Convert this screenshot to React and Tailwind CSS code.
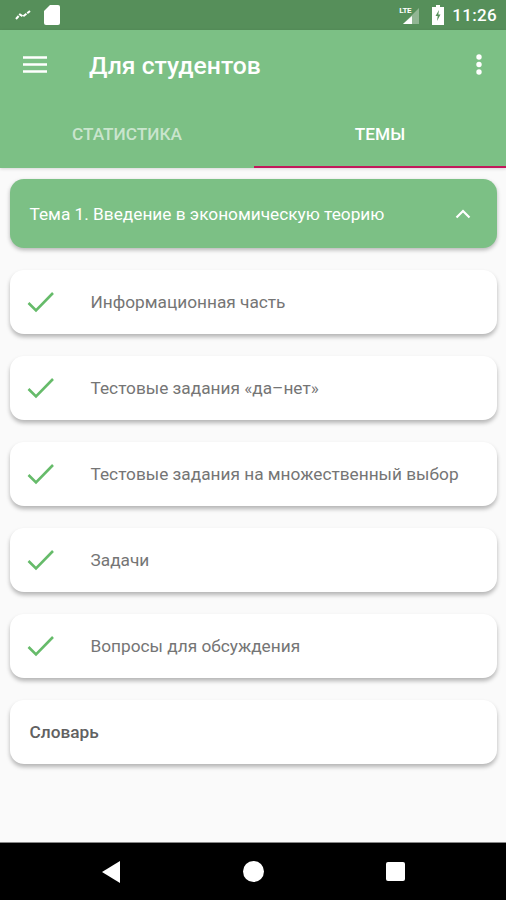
const items = [
  "Информационная часть",
  "Тестовые задания «да–нет»",
  "Тестовые задания на множественный выбор",
  "Задачи",
  "Вопросы для обсуждения",
];

const cardClass =
  "mx-[9.5px] h-[64px] flex items-center rounded-[14px] bg-white shadow-[0_3px_4px_rgba(0,0,0,0.28)]";

function Check() {
  return (
    <svg width="30" height="24" viewBox="0 0 30 24" fill="none" className="ml-[16px] mr-[35px] shrink-0">
      <path d="M2.5 13 L10 20.5 L27 3" stroke="#66bb6a" strokeWidth="2.6" />
    </svg>
  );
}

export default function App() {
  return (
    <div className="w-[506px] h-[900px] flex flex-col bg-[#fafafa] overflow-hidden font-['Roboto',sans-serif]">
      <div className="h-[30px] shrink-0 bg-[#568f5a] flex items-center pl-[15px] pr-[9px] text-white">
        <svg width="16" height="10" viewBox="0 0 16 10" fill="none">
          <path d="M1 9 L5 4.5 L8 6.5 L15 1" stroke="#fff" strokeWidth="2" strokeDasharray="4 1" />
        </svg>
        <svg width="16" height="20" viewBox="0 0 16 20" className="ml-[13px]">
          <path d="M6 0 H14 a2 2 0 0 1 2 2 V18 a2 2 0 0 1 -2 2 H2 a2 2 0 0 1 -2 -2 V6 Z" fill="#fff" />
        </svg>
        <div className="ml-auto flex items-center">
          <div className="relative w-[22px] h-[20px]">
            <svg width="22" height="18" viewBox="0 0 22 18" className="absolute left-0 top-[2px]">
              <path d="M21 1 V17 H5 Z" fill="#fff" fillOpacity="0.35" />
              <path d="M14 9 V17 H5 Z" fill="#fff" />
            </svg>
            <span className="absolute left-[1px] top-[1px] text-[8px] leading-[10px] font-bold tracking-[-0.4px]">LTE</span>
          </div>
          <svg width="12" height="20" viewBox="0 0 12 20" className="ml-[12px]">
            <path d="M4 0 H8 V2 H12 V20 H0 V2 H4 Z" fill="#fff" />
            <path d="M7 5 L3.5 11 H5.7 L5 16 L8.5 9.5 H6.3 Z" fill="#568f5a" />
          </svg>
          <span className="ml-[8px] text-[17px] leading-[20px] font-medium tracking-[0.3px]">11:26</span>
        </div>
      </div>

      <div className="h-[138px] shrink-0 bg-[#7cc085] flex flex-col shadow-[0_1px_3px_rgba(0,0,0,0.15)]">
        <div className="h-[71px] shrink-0 flex items-center pl-[23px] pr-[24px]">
          <svg width="24" height="17" viewBox="0 0 24 17" className="shrink-0 -translate-y-[1px]">
            <path d="M0 1.5 H24 M0 8.5 H24 M0 15.5 H24" stroke="#fff" strokeWidth="2.4" />
          </svg>
          <span className="ml-[42px] text-[24.7px] leading-[32px] font-medium text-white">Для студентов</span>
          <svg width="6" height="21" viewBox="0 0 6 21" className="ml-auto -translate-y-[1px]">
            <circle cx="3" cy="3" r="2.7" fill="#fff" />
            <circle cx="3" cy="10.5" r="2.7" fill="#fff" />
            <circle cx="3" cy="18" r="2.7" fill="#fff" />
          </svg>
        </div>
        <div className="flex-1 flex">
          <div className="w-[254px] flex items-start justify-center pt-[22px] text-[17.25px] leading-[22px] font-medium text-white/60">
            СТАТИСТИКА
          </div>
          <div className="w-[252px] flex items-start justify-center pt-[22px] text-[17.25px] leading-[22px] font-medium text-white border-b-[2px] border-[#c2185b]">
            ТЕМЫ
          </div>
        </div>
      </div>

      <div className="flex-1 flex flex-col pt-[11px] gap-[22px]">
        <div className="mx-[9.5px] h-[69px] flex items-center justify-between rounded-[14px] bg-[#7cc085] pl-[20px] pr-[26px] shadow-[0_2px_4px_rgba(0,0,0,0.28)]">
          <span className="text-[17.25px] leading-[22px] text-white">Тема 1. Введение в экономическую теорию</span>
          <svg width="16" height="10" viewBox="0 0 16 10" fill="none">
            <path d="M1.5 8.5 L8 2 L14.5 8.5" stroke="#fff" strokeWidth="2.2" />
          </svg>
        </div>
        {items.map((t) => (
          <div key={t} className={cardClass}>
            <Check />
            <span className="text-[17.25px] leading-[22px] text-[#757575]">{t}</span>
          </div>
        ))}
        <div className={cardClass + " pl-[20px]"}>
          <span className="text-[17.25px] leading-[22px] font-medium text-[#616161]">Словарь</span>
        </div>
      </div>

      <div className="h-[58px] shrink-0 bg-black flex items-center relative border-t border-[#888]">
        <svg width="18" height="22" viewBox="0 0 18 22" className="ml-[102px]">
          <path d="M18 0 V22 L0 11 Z" fill="#fff" />
        </svg>
        <div className="ml-[123px] w-[21px] h-[21px] rounded-full bg-white" />
        <div className="ml-[122px] w-[19px] h-[19px] rounded-[2px] bg-white" />
      </div>
    </div>
  );
}
